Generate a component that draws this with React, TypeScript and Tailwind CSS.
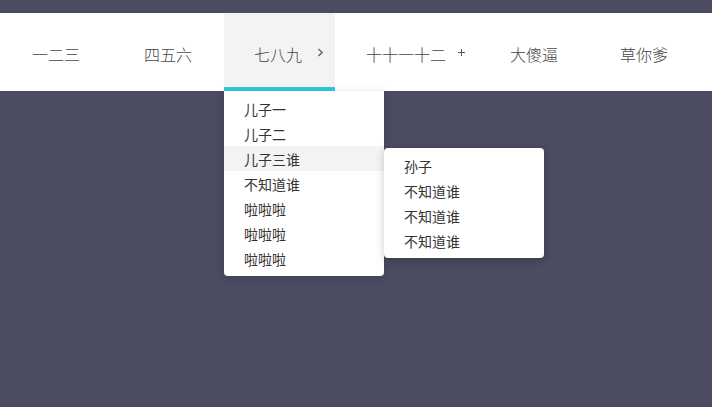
const subItems = ['儿子一', '儿子二', '儿子三谁', '不知道谁', '啦啦啦', '啦啦啦', '啦啦啦']
const grandItems = ['孙子', '不知道谁', '不知道谁', '不知道谁']

function Dropdown() {
  return (
    <div className="absolute left-0 top-[78px] z-10 w-[160px] rounded-b-[4px] bg-white py-[5px] font-normal shadow-[0_2px_8px_rgba(0,0,0,0.15)]">
      {subItems.map((label, i) => (
        <div
          key={i}
          className={`relative flex h-[25px] items-center pl-[20px] pt-[1px] text-[14px] text-[#333] ${i === 2 ? 'bg-[#f3f3f3]' : ''}`}
        >
          {label}
          {i === 2 && (
            <div className="absolute left-[160px] top-[2px] w-[160px] rounded-[4px] bg-white py-[5px] shadow-[0_2px_8px_rgba(0,0,0,0.2)]">
              {grandItems.map((g, j) => (
                <div key={j} className="flex h-[25px] items-center pl-[20px] pt-[1px] text-[14px] text-[#333]">
                  {g}
                </div>
              ))}
            </div>
          )}
        </div>
      ))}
    </div>
  )
}

export default function App() {
  return (
    <div
      className="min-h-screen bg-[#4b4b61] pt-[13px]"
      style={{ fontFamily: '"Noto Sans CJK SC", "Noto Sans", sans-serif' }}
    >
      <nav className="flex h-[78px] bg-white text-[16px] font-light text-[#444]">
        <div className="flex w-[112px] items-center justify-center pt-[4px]">一二三</div>
        <div className="flex w-[112px] items-center justify-center pt-[4px]">四五六</div>
        <div className="relative flex w-[111px] flex-col bg-[#f3f3f3]">
          <div className="flex flex-1 items-center pl-[30px] pt-[8px]">
            <span>七八九</span>
            <svg className="mb-[3px] ml-[15px]" width="7" height="9" viewBox="0 0 7 9" fill="none">
              <path d="M1.5 1 L5.2 4.5 L1.5 8" stroke="#555" strokeWidth="1.2" />
            </svg>
          </div>
          <div className="h-[4px] bg-[#2ec8dc]" />
          <Dropdown />
        </div>
        <div className="flex w-[143px] items-center pl-[31px] pt-[4px]">
          <span>十十一十二</span>
          <svg className="mb-[4px] ml-[12px]" width="7" height="7" viewBox="0 0 7 7" fill="none">
            <path d="M3.5 0 V7 M0 3.5 H7" stroke="#555" strokeWidth="1" />
          </svg>
        </div>
        <div className="flex w-[110px] items-center pl-[32px] pt-[4px]">大傻逼</div>
        <div className="flex w-[112px] items-center pl-[32px] pt-[4px]">草你爹</div>
      </nav>
    </div>
  )
}
